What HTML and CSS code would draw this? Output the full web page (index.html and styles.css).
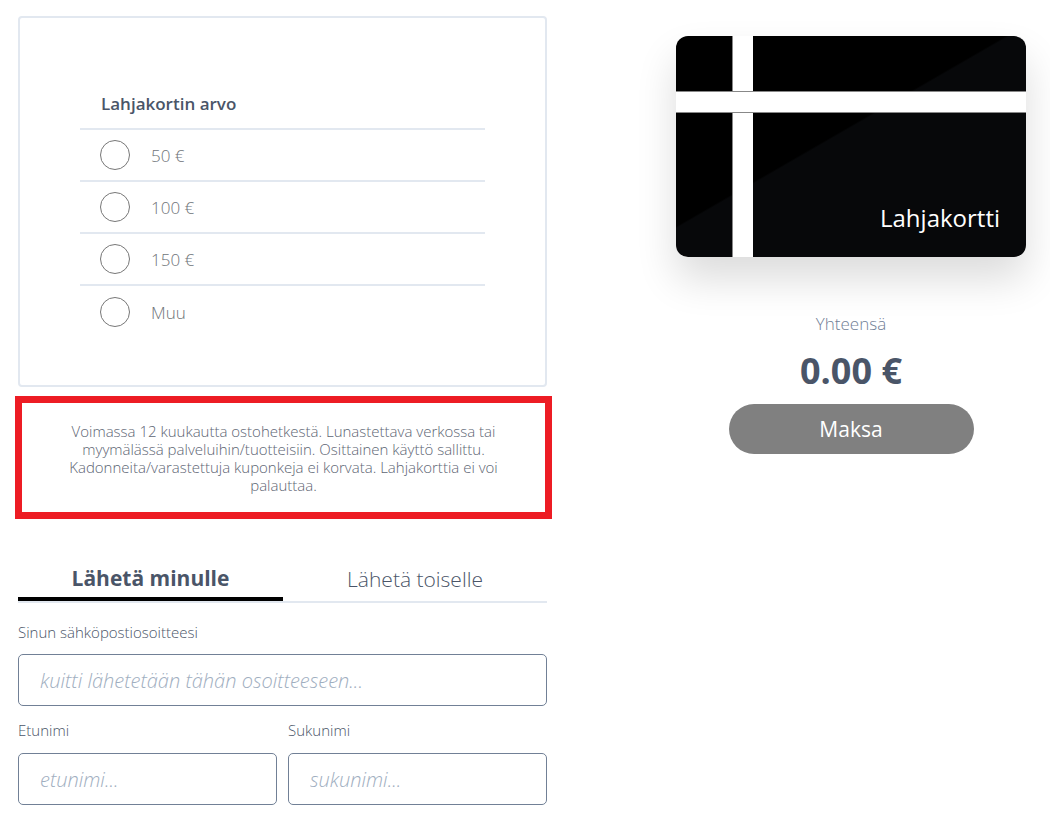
FILE: index.html
```html
<!DOCTYPE html>
<html lang="fi">
<head>
    <meta charset="UTF-8">
    <meta name="viewport" content="width=device-width, initial-scale=1.0">
    <title>Lahjakortti</title>
    <link rel="stylesheet" href="styles.css">
</head>
<body>

    <div class="page">

        <div class="left">

            <div class="value-card">
                <div class="value-list">
                    <h3 class="value-title">Lahjakortin arvo</h3>
                    <label class="value-row"><span class="radio"></span><span>50 €</span></label>
                    <label class="value-row"><span class="radio"></span><span>100 €</span></label>
                    <label class="value-row"><span class="radio"></span><span>150 €</span></label>
                    <label class="value-row"><span class="radio"></span><span>Muu</span></label>
                </div>
            </div>

            <div class="terms">
                <p>Voimassa 12 kuukautta ostohetkestä. Lunastettava verkossa tai myymälässä palveluihin/tuotteisiin. Osittainen käyttö sallittu. Kadonneita/varastettuja kuponkeja ei korvata. Lahjakorttia ei voi palauttaa.</p>
            </div>

            <div class="tabs">
                <button class="tab active">Lähetä minulle</button>
                <button class="tab">Lähetä toiselle</button>
            </div>

            <div class="field">
                <label class="field-label">Sinun sähköpostiosoitteesi</label>
                <input class="input" type="text" placeholder="kuitti lähetetään tähän osoitteeseen...">
            </div>

            <div class="field-row">
                <div class="field">
                    <label class="field-label">Etunimi</label>
                    <input class="input" type="text" placeholder="etunimi...">
                </div>
                <div class="field">
                    <label class="field-label">Sukunimi</label>
                    <input class="input" type="text" placeholder="sukunimi...">
                </div>
            </div>

        </div>

        <div class="right">
            <div class="gift-card">
                <div class="stripe stripe-v"></div>
                <div class="stripe stripe-h"></div>
                <span class="gift-card-name">Lahjakortti</span>
            </div>

            <p class="total-label">Yhteensä</p>
            <p class="total">0.00 €</p>
            <button class="pay-btn">Maksa</button>
        </div>

    </div>

</body>
</html>
```

FILE: styles.css
```css
*,*::before,*::after {
    box-sizing: border-box;
    margin: 0;
    padding: 0;
    font-family: 'Open Sans', 'Noto Sans', sans-serif;
}

body {
    background-color: #fff;
    color: #4a5568;
}

.page {
    display: grid;
    grid-template-columns: 529px 398px;
    column-gap: 105px;
    padding: 16px 0 0 18px;
}

/* left side */

.value-card {
    border: 2px solid #e2e8f0;
    border-radius: 4px;
    height: 371px;
    padding: 74px 0 0;
}

.value-list {
    width: 405px;
    margin: 0 auto;
}

.value-title {
    font-size: 17px;
    font-weight: 600;
    color: #4a5568;
    padding: 0 0 13px 21px;
    border-bottom: 2px solid #e2e8f0;
}

.value-row {
    display: flex;
    align-items: center;
    gap: 21px;
    height: 52px;
    padding-left: 20px;
    font-size: 17px;
    font-weight: 300;
    color: #6f7479;
    border-bottom: 2px solid #e2e8f0;
}

.value-row:last-child {
    border-bottom: none;
}

.radio {
    width: 30px;
    height: 30px;
    border: 1.5px solid #777;
    border-radius: 50%;
}

.terms {
    margin: 9px -5px 0 -3px;
    border: 7px solid #ed1c24;
    height: 123px;
    display: flex;
    align-items: center;
    justify-content: center;
    padding: 0 28px;
}

.terms p {
    font-size: 15px;
    font-weight: 300;
    line-height: 18px;
    color: #5d6573;
    text-align: center;
}

.tabs {
    display: grid;
    grid-template-columns: 265px 1fr;
    margin-top: 41px;
    border-bottom: 2px solid #e2e8f0;
}

.tab {
    background: none;
    border: none;
    height: 41px;
    font-size: 21px;
    font-weight: 300;
    color: #4a5568;
    padding-bottom: 4px;
}

.tab.active {
    font-weight: 700;
    border-bottom: 4px solid #000;
    margin-bottom: -2px;
    padding-bottom: 2px;
}

.field {
    display: flex;
    flex-direction: column;
    min-width: 0;
}

.field-label {
    font-size: 15px;
    font-weight: 300;
    color: #4a5568;
    margin: 19px 0 12px;
    line-height: 20px;
}

.input {
    width: 100%;
    min-width: 0;
    height: 52px;
    border: 1px solid #718096;
    border-radius: 5px;
    padding: 0 21px;
    font-size: 20px;
    font-style: italic;
    font-weight: 300;
    color: #4a5568;
    outline: none;
}

.input::placeholder {
    color: #a0aec0;
}

.field-row {
    display: grid;
    grid-template-columns: 259px 259px;
    column-gap: 11px;
}

.field-row .field-label {
    margin-top: 14px;
    margin-bottom: 13px;
}

/* right side */

.right {
    display: flex;
    flex-direction: column;
    align-items: center;
    padding-top: 20px;
}

.gift-card {
    position: relative;
    width: 350px;
    height: 221px;
    border-radius: 12px;
    background: linear-gradient(150deg, #000 0%, #000 45%, #07080a 45.5%, #07080a 100%);
    box-shadow: 0 22px 40px rgba(0, 0, 0, 0.14);
    overflow: hidden;
    display: flex;
    align-items: flex-end;
    justify-content: flex-end;
    padding: 0 26px 24px 0;
}

.stripe {
    position: absolute;
    background-color: #fff;
}

.stripe-v {
    left: 57px;
    top: 0;
    width: 20px;
    height: 100%;
    box-shadow: -1px 0 0 #888;
}

.stripe-h {
    left: 0;
    top: 55px;
    width: 100%;
    height: 22px;
    border-top: 1px solid #888;
    border-bottom: 1px solid #888;
}

.gift-card-name {
    position: relative;
    color: #fff;
    font-size: 24px;
    line-height: 30px;
}

.total-label {
    margin-top: 55px;
    font-size: 17px;
    font-weight: 300;
    color: #718096;
}

.total {
    margin-top: 14px;
    font-size: 36px;
    font-weight: 700;
    color: #4a5568;
    line-height: 44px;
}

.pay-btn {
    margin-top: 11px;
    width: 245px;
    height: 50px;
    border: none;
    border-radius: 25px;
    background-color: #808080;
    color: #fff;
    font-size: 21px;
    cursor: pointer;
}
```
